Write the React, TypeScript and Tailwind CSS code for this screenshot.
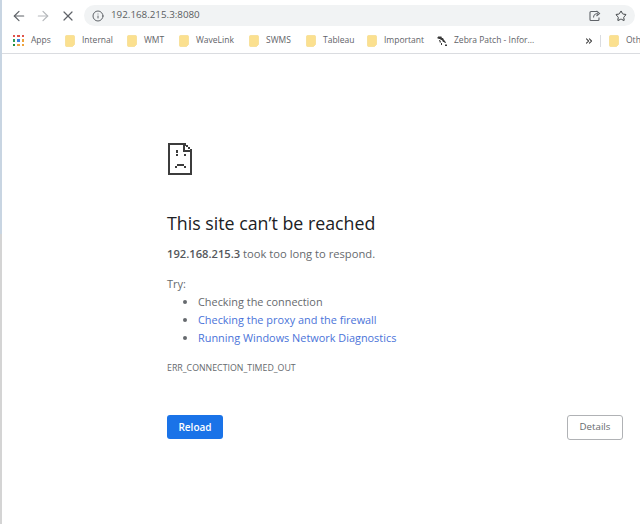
import { ArrowLeft, ArrowRight, ChevronsRight, Info, Star, X } from 'lucide-react';

const bookmarks = [
  { label: 'Internal', width: 'w-[62px]' },
  { label: 'WMT', width: 'w-[52px]' },
  { label: 'WaveLink', width: 'w-[70px]' },
  { label: 'SWMS', width: 'w-[57px]' },
  { label: 'Tableau', width: 'w-[61px]' },
  { label: 'Important', width: 'w-[69px]' },
];

function Folder() {
  return (
    <svg width="10" height="12" viewBox="0 0 10 12" className="shrink-0">
      <path d="M0.5 1.5a1 1 0 0 1 1-1h7a1 1 0 0 1 1 1v8l-2 2h-6a1 1 0 0 1-1-1z" fill="#fbe08f" stroke="#f5d680" strokeWidth="0.6" />
    </svg>
  );
}

function AppsGrid() {
  const colors = ['#e0524a', '#e0524a', '#e0524a', '#2f9e58', '#3f7fe0', '#eda33d', '#1e8e3e', '#eda33d', '#eda33d'];
  return (
    <div className="grid grid-cols-3 gap-[2px] w-[11px] h-[11px] shrink-0">
      {colors.map((color, index) => (
        <span key={index} style={{ backgroundColor: color }} />
      ))}
    </div>
  );
}

function ShareBox() {
  return (
    <svg width="13" height="12" viewBox="0 0 13 12" fill="none" stroke="#5f6368" strokeWidth="1.1" className="ml-auto">
      <path d="M8 1.5H2a1 1 0 0 0-1 1v7a1 1 0 0 0 1 1h7a1 1 0 0 0 1-1V7.5" />
      <path d="M4.5 7.5c0-2.5 2-4 4.5-4M7.5 1l3 2.5-3 2.5" />
    </svg>
  );
}

function ZebraIcon() {
  return (
    <svg width="12" height="12" viewBox="0 0 12 12" className="shrink-0" fill="#3a3a3a">
      <path d="M1 3l2-2 1 1 1-1 1 2 1 0 1 2 1 1 1 2-1 0-1-1-1 0-1-2-1 0-1-1-1 0z" />
      <path d="M3 5l1 0 1 2-1 1zM5 8l1 0 0 2-1 0zM9 9.500h2v1.500H9z" />
    </svg>
  );
}

function SadPage() {
  return (
    <svg width="26" height="33" viewBox="0 0 26 33" shapeRendering="crispEdges" fill="#3c3c3c">
      <path d="M1 1h15v2H3v28h20V10h2v23H1z" />
      <path d="M16 1h3v2h2v2h2v2h2v3h-9zM18 4v4h5V7h-2V5h-2V4z" fillRule="evenodd" />
      <path d="M9 8h2v3H9zM17 12h2v2h-2zM9 12h2v2H9z" />
      <path d="M10 22h7v2h-7zM8 24h2v2H8zM17 24h2v2h-2z" />
    </svg>
  );
}

export default function App() {
  return (
    <div className="w-[640px] h-[524px] overflow-hidden bg-white font-['Open_Sans',sans-serif] flex">
      {/* Window edge */}
      <div className="w-[2px] flex flex-col shrink-0">
        <div className="h-[234px] bg-[#c8d5e2]" />
        <div className="flex-1 bg-[#d4d4d4]" />
      </div>

      <div className="flex-1 min-w-0">
        {/* Toolbar */}
        <div className="h-[28px] flex items-center pl-[9px] pr-[5px] pt-[3px]">
          <ArrowLeft size={16} strokeWidth={1.8} className="text-[#5f6368]" />
          <ArrowRight size={16} strokeWidth={1.8} className="ml-[8px] text-[#b5b8bb]" />
          <X size={16} strokeWidth={1.8} className="ml-[9px] text-[#5f6368]" />
          <div className="ml-[8px] flex-1 h-[21px] rounded-full bg-[#f1f3f4] flex items-center pl-[8px] pr-[8px]">
            <Info size={12} className="text-[#5f6368]" />
            <span className="ml-[7px] text-[9.8px] text-[#5a5d61]">192.168.215.3:8080</span>
            <ShareBox />
            <Star size={12} className="ml-[13px] text-[#3c4043]" />
          </div>
        </div>

        {/* Bookmarks */}
        <div className="h-[26px] flex items-center pl-[11px] border-b border-[#dadce0] text-[8.5px] text-[#5f6368] whitespace-nowrap overflow-hidden">
          <AppsGrid />
          <span className="ml-[7px] w-[34px] shrink-0">Apps</span>
          {bookmarks.map((bookmark) => (
            <div key={bookmark.label} className={`flex items-center gap-[7px] shrink-0 ${bookmark.width}`}>
              <Folder />
              <span>{bookmark.label}</span>
            </div>
          ))}
          <ZebraIcon />
          <span className="ml-[6px] w-[83px] shrink-0">Zebra Patch - Infor...</span>
          <ChevronsRight size={10} strokeWidth={2.6} className="ml-[47px] shrink-0 text-[#444]" />
          <div className="ml-[6px] w-px h-[12px] bg-[#dadce0] shrink-0" />
          <div className="ml-[8px] flex items-center gap-[7px] shrink-0">
            <Folder />
            <span>Other</span>
          </div>
        </div>

        {/* Error content */}
        <div className="pl-[165px] pr-[17px]">
          <div className="pt-[88px]">
            <SadPage />
          </div>
          <h1 className="mt-[36px] text-[17.8px] leading-[24px] font-normal text-[#202124]">This site can’t be reached</h1>
          <p className="mt-[10px] text-[11.2px] leading-[18px] text-[#666a6e]">
            <span className="font-semibold text-[#55585c]">192.168.215.3</span> took too long to respond.
          </p>
          <p className="mt-[12px] text-[11px] leading-[18px] text-[#666a6e]">Try:</p>
          <ul className="pl-[31px] list-disc text-[10.9px] leading-[18px] text-[#666a6e]">
            <li>Checking the connection</li>
            <li><span className="text-[#4a73d9]">Checking the proxy and the firewall</span></li>
            <li><span className="text-[#4a73d9]">Running Windows Network Diagnostics</span></li>
          </ul>
          <p className="mt-[14px] text-[8.8px] leading-[14px] text-[#666a6e]">ERR_CONNECTION_TIMED_OUT</p>
          <div className="mt-[40px] flex items-start justify-between">
            <button type="button" className="w-[56px] h-[24px] rounded-[3px] bg-[#1a73e8] text-white text-[10px] font-semibold">Reload</button>
            <button type="button" className="w-[56px] h-[25px] rounded-[3px] border border-[#b0b2b5] bg-white text-[#666a6e] text-[9.7px]">Details</button>
          </div>
        </div>
      </div>
    </div>
  );
}
